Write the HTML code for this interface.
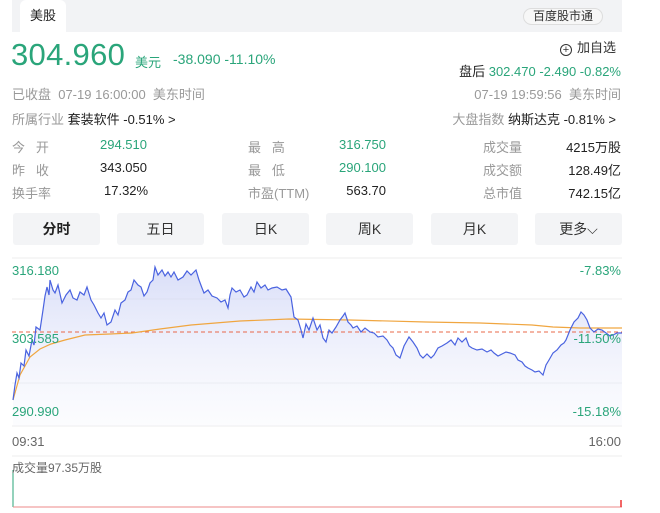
<!DOCTYPE html>
<html><head><meta charset="utf-8"><style>
*{margin:0;padding:0;box-sizing:border-box}
body{width:660px;height:513px;background:#fff;font-family:"Liberation Sans","Noto Sans CJK SC",sans-serif;position:relative;overflow:hidden;color:#222}
.a{position:absolute;white-space:nowrap}
.g{color:#2aa57a}.gr{color:#999}
.btn{position:absolute;top:213px;width:87px;height:32px;background:#f3f4f6;border-radius:3px;text-align:center;line-height:32px;font-size:14px;color:#333}
</style></head><body>
<div class="a" style="left:12px;top:0;width:610px;height:32px;background:#f2f3f5"></div>
<div class="a" style="left:20px;top:0;width:46px;height:32px;background:#fff;border-radius:6px 6px 0 0;font-size:13px;line-height:32px;text-align:center">美股</div>
<div class="a" style="left:523px;top:8px;width:80px;height:17px;border:1px solid #ddd;border-radius:9px;background:#f7f7f7;font-size:12px;line-height:15px;text-align:center;color:#333">百度股市通</div>
<div class="a g" style="left:11px;top:37px;font-size:31px;line-height:36px;letter-spacing:0.3px">304.960</div>
<div class="a g" style="left:135px;top:52px;font-size:13px">美元</div>
<div class="a g" style="left:173px;top:51px;font-size:14px">-38.090 -11.10%</div>
<div class="a" style="left:560px;top:37px;font-size:13px;color:#333"><span style="display:inline-block;width:12px;height:12px;border:1px solid #333;border-radius:50%;font-size:11px;line-height:10px;text-align:center;vertical-align:-1px;margin-right:5px">+</span>加自选</div>
<div class="a" style="right:39px;top:61px;font-size:13px">盘后 <span class="g">302.470 -2.490 -0.82%</span></div>
<div class="a gr" style="left:12px;top:84px;font-size:13px">已收盘&nbsp; 07-19 16:00:00&nbsp; 美东时间</div>
<div class="a gr" style="right:39px;top:84px;font-size:13px">07-19 19:59:56&nbsp; 美东时间</div>
<div class="a" style="left:12px;top:109px;font-size:13px"><span class="gr">所属行业</span> 套装软件 -0.51% &gt;</div>
<div class="a" style="right:44px;top:109px;font-size:13px"><span class="gr">大盘指数</span> 纳斯达克 -0.81% &gt;</div>
<div style="font-size:13px">
<div class="a gr" style="left:12px;top:137px">今&nbsp;&nbsp;&nbsp;开</div><div class="a g" style="left:100px;top:137px">294.510</div>
<div class="a gr" style="left:12px;top:160px">昨&nbsp;&nbsp;&nbsp;收</div><div class="a" style="left:100px;top:160px">343.050</div>
<div class="a gr" style="left:12px;top:183px">换手率</div><div class="a" style="left:104px;top:183px">17.32%</div>
<div class="a gr" style="left:248px;top:137px">最&nbsp;&nbsp;&nbsp;高</div><div class="a g" style="right:274px;top:137px">316.750</div>
<div class="a gr" style="left:248px;top:160px">最&nbsp;&nbsp;&nbsp;低</div><div class="a g" style="right:274px;top:160px">290.100</div>
<div class="a gr" style="left:248px;top:183px">市盈(TTM)</div><div class="a" style="right:274px;top:183px">563.70</div>
<div class="a gr" style="left:483px;top:137px">成交量</div><div class="a" style="right:39px;top:137px">4215万股</div>
<div class="a gr" style="left:483px;top:160px">成交额</div><div class="a" style="right:39px;top:160px">128.49亿</div>
<div class="a gr" style="left:483px;top:183px">总市值</div><div class="a" style="right:39px;top:183px">742.15亿</div>
</div>
<div class="btn" style="left:13px;font-weight:bold;color:#222">分时</div>
<div class="btn" style="left:117px">五日</div>
<div class="btn" style="left:222px">日K</div>
<div class="btn" style="left:326px">周K</div>
<div class="btn" style="left:431px">月K</div>
<div class="btn" style="left:535px">更多⌵</div>
<svg class="a" style="left:0;top:0" width="660" height="513">
<defs><linearGradient id="f" x1="0" y1="0" x2="0" y2="1"><stop offset="0" stop-color="#c9d0f5" stop-opacity=".7"/><stop offset="1" stop-color="#eef0fb" stop-opacity=".2"/></linearGradient></defs>
<g stroke="#eee" stroke-width="1"><line x1="12" y1="258" x2="622" y2="258"/><line x1="12" y1="299" x2="622" y2="299"/><line x1="12" y1="383" x2="622" y2="383"/><line x1="12" y1="426" x2="622" y2="426"/><line x1="12" y1="456" x2="622" y2="456"/></g>
<polygon fill="url(#f)" points="13,400 15,385 17,373 19,378 21,363 24,366 26,350 29,356 32,340 34,345 36,327 40,330 43,310 45,296 47,287 49,295 50,280 53,290 55,293 58,285 62,303 66,295 70,290 73,298 77,300 80,292 84,295 87,287 91,300 94,305 98,313 101,318 104,313 107,325 111,322 115,310 118,315 121,303 125,300 128,292 131,290 134,280 138,285 141,287 144,296 147,292 150,283 153,280 155,267 158,275 162,270 165,276 168,272 171,277 174,272 178,280 183,277 187,271 191,275 196,270 199,280 202,288 204,293 208,290 212,296 217,298 221,302 225,300 228,308 230,295 232,288 236,292 240,290 244,297 247,295 251,287 254,292 257,282 261,288 265,285 268,290 272,288 277,287 282,290 286,289 291,297 294,317 298,320 301,330 303,338 306,324 309,330 313,318 317,330 320,325 323,338 326,342 329,330 332,333 336,327 340,320 343,316 345,313 348,322 351,325 353,328 357,326 361,332 365,328 370,332 374,333 378,337 383,336 387,340 390,345 393,348 396,355 400,358 404,346 409,337 413,342 417,348 420,355 423,358 427,354 431,358 434,355 438,348 442,346 447,343 451,340 455,345 458,338 462,342 466,338 469,346 472,348 477,350 482,349 487,352 491,350 494,353 498,356 502,354 506,352 510,353 515,355 518,360 522,362 525,366 528,368 532,370 535,372 539,371 543,375 546,365 549,360 553,353 557,350 561,345 564,343 566,340 570,330 574,322 578,318 581,312 584,315 587,320 590,328 594,332 598,329 602,330 606,333 610,336 613,335 617,333 622,333 622,426 13,426"/>
<line x1="12" y1="332" x2="622" y2="332" stroke="#e8684a" stroke-width="1" stroke-dasharray="4,3"/>
<polyline fill="none" stroke="#f0a640" stroke-width="1.2" points="13,400 20,375 30,357 40,349 51,344 65,340 85,335 110,334 132,333 160,329 191,325 240,321 289,319 350,320 426,322 480,323 532,325 553,327 580,328 622,328"/>
<polyline fill="none" stroke="#4a63e0" stroke-width="1.2" points="13,400 15,385 17,373 19,378 21,363 24,366 26,350 29,356 32,340 34,345 36,327 40,330 43,310 45,296 47,287 49,295 50,280 53,290 55,293 58,285 62,303 66,295 70,290 73,298 77,300 80,292 84,295 87,287 91,300 94,305 98,313 101,318 104,313 107,325 111,322 115,310 118,315 121,303 125,300 128,292 131,290 134,280 138,285 141,287 144,296 147,292 150,283 153,280 155,267 158,275 162,270 165,276 168,272 171,277 174,272 178,280 183,277 187,271 191,275 196,270 199,280 202,288 204,293 208,290 212,296 217,298 221,302 225,300 228,308 230,295 232,288 236,292 240,290 244,297 247,295 251,287 254,292 257,282 261,288 265,285 268,290 272,288 277,287 282,290 286,289 291,297 294,317 298,320 301,330 303,338 306,324 309,330 313,318 317,330 320,325 323,338 326,342 329,330 332,333 336,327 340,320 343,316 345,313 348,322 351,325 353,328 357,326 361,332 365,328 370,332 374,333 378,337 383,336 387,340 390,345 393,348 396,355 400,358 404,346 409,337 413,342 417,348 420,355 423,358 427,354 431,358 434,355 438,348 442,346 447,343 451,340 455,345 458,338 462,342 466,338 469,346 472,348 477,350 482,349 487,352 491,350 494,353 498,356 502,354 506,352 510,353 515,355 518,360 522,362 525,366 528,368 532,370 535,372 539,371 543,375 546,365 549,360 553,353 557,350 561,345 564,343 566,340 570,330 574,322 578,318 581,312 584,315 587,320 590,328 594,332 598,329 602,330 606,333 610,336 613,335 617,333 622,333"/>
<line x1="13" y1="470" x2="13" y2="507" stroke="#2aa57a" stroke-width="1"/>
<line x1="13" y1="507" x2="622" y2="507" stroke="#e88" stroke-width="1"/>
<line x1="621" y1="500" x2="621" y2="507" stroke="#e33" stroke-width="1.5"/>
</svg>
<div class="a g" style="left:12px;top:263px;font-size:13px">316.180</div>
<div class="a g" style="left:12px;top:331px;font-size:13px">303.585</div>
<div class="a g" style="left:12px;top:404px;font-size:13px">290.990</div>
<div class="a g" style="right:39px;top:263px;font-size:13px">-7.83%</div>
<div class="a g" style="right:39px;top:331px;font-size:13px">-11.50%</div>
<div class="a g" style="right:39px;top:404px;font-size:13px">-15.18%</div>
<div class="a" style="left:12px;top:434px;font-size:13px;color:#666">09:31</div>
<div class="a" style="right:39px;top:434px;font-size:13px;color:#666">16:00</div>
<div class="a" style="left:12px;top:459px;font-size:12px;color:#666">成交量97.35万股</div>
</body></html>
